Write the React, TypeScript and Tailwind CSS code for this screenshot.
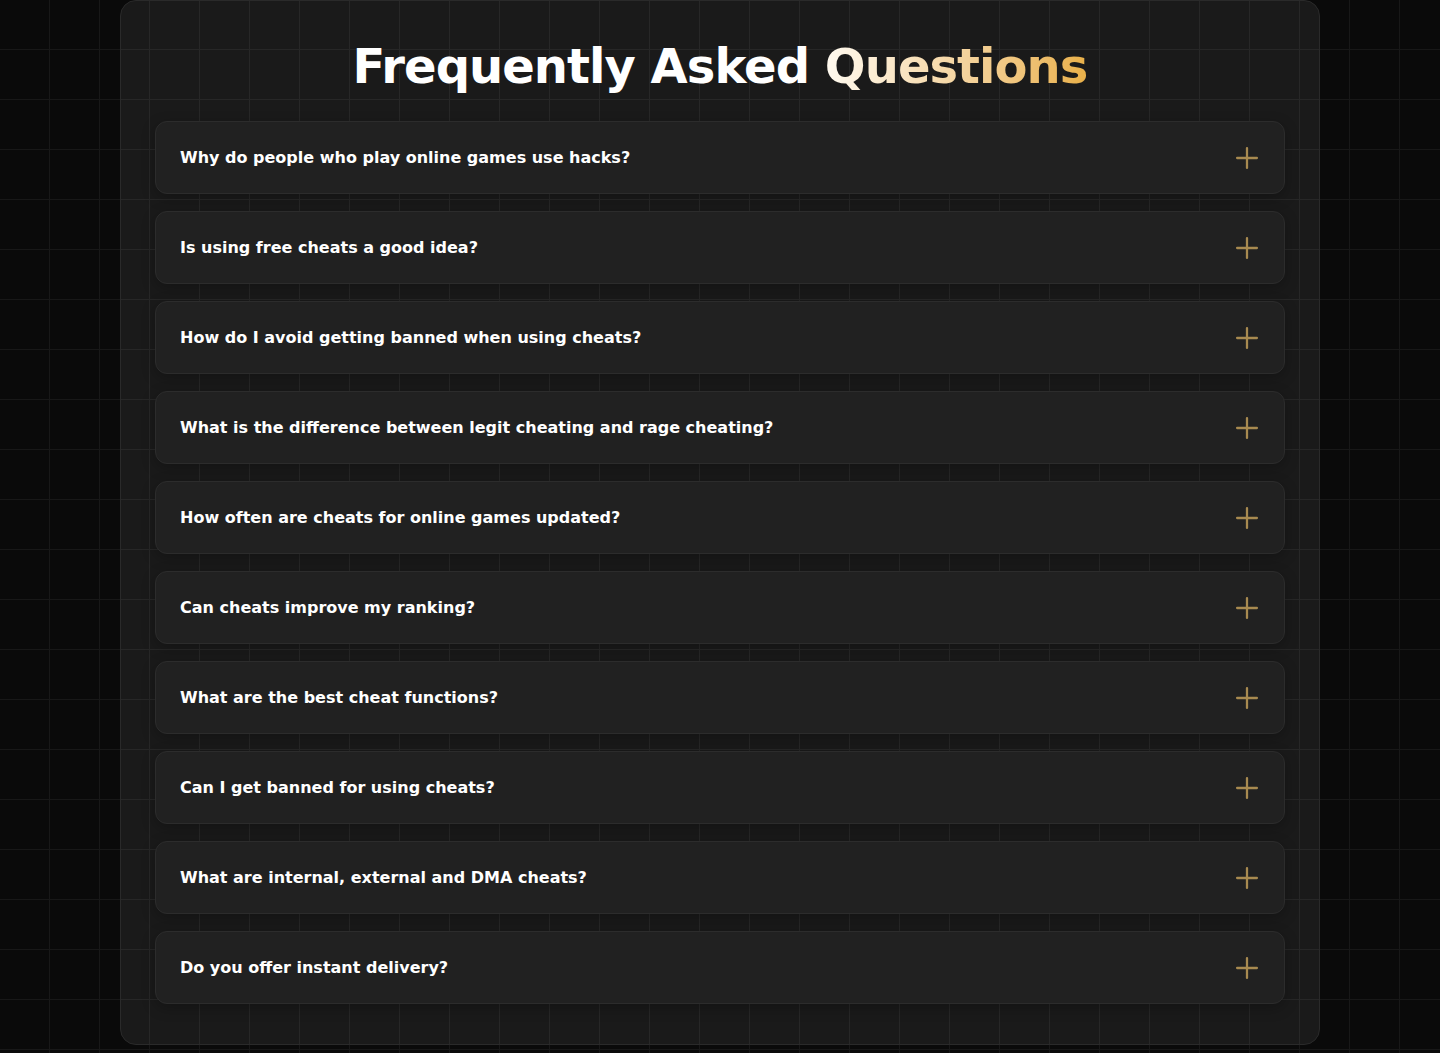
import { Plus } from "lucide-react";

const faqs = [
  "Why do people who play online games use hacks?",
  "Is using free cheats a good idea?",
  "How do I avoid getting banned when using cheats?",
  "What is the difference between legit cheating and rage cheating?",
  "How often are cheats for online games updated?",
  "Can cheats improve my ranking?",
  "What are the best cheat functions?",
  "Can I get banned for using cheats?",
  "What are internal, external and DMA cheats?",
  "Do you offer instant delivery?",
];

function FaqRow({ question }: { question: string }) {
  return (
    <button className="flex h-[73px] w-full items-center justify-between rounded-xl border border-[#2c2c2c] bg-[#212121] pl-6 pr-5 text-left shadow-[0_4px_14px_rgba(0,0,0,0.25)]">
      <span className="text-base font-bold text-white">{question}</span>
      <Plus className="h-[34px] w-[34px] text-[#a88a50]" strokeWidth={1.6} />
    </button>
  );
}

export default function App() {
  return (
    <div
      className="min-h-[1053px] w-full bg-[#0a0a0a] bg-[linear-gradient(to_right,#181818_1px,transparent_1px),linear-gradient(to_bottom,#181818_1px,transparent_1px)] bg-[size:50px_50px] bg-[position:-1px_-1px]"
      style={{ fontFamily: '"DejaVu Sans", sans-serif' }}
    >
      <div className="mx-auto w-[1200px] pb-[9px]">
        <section className="rounded-2xl border border-[#2a2a2a] bg-white/[0.068] px-[34px] pb-10 pt-[37px]">
          <h2 className="mb-[27px] text-center text-5xl font-bold leading-[56px] tracking-[-0.02em] text-white">
            Frequently Asked{" "}
            <span className="bg-gradient-to-r from-[#fffaf0] to-[#e9b048] bg-clip-text text-transparent">
              Questions
            </span>
          </h2>
          <div className="flex flex-col gap-[17px]">
            {faqs.map((q) => (
              <FaqRow key={q} question={q} />
            ))}
          </div>
        </section>
      </div>
    </div>
  );
}
